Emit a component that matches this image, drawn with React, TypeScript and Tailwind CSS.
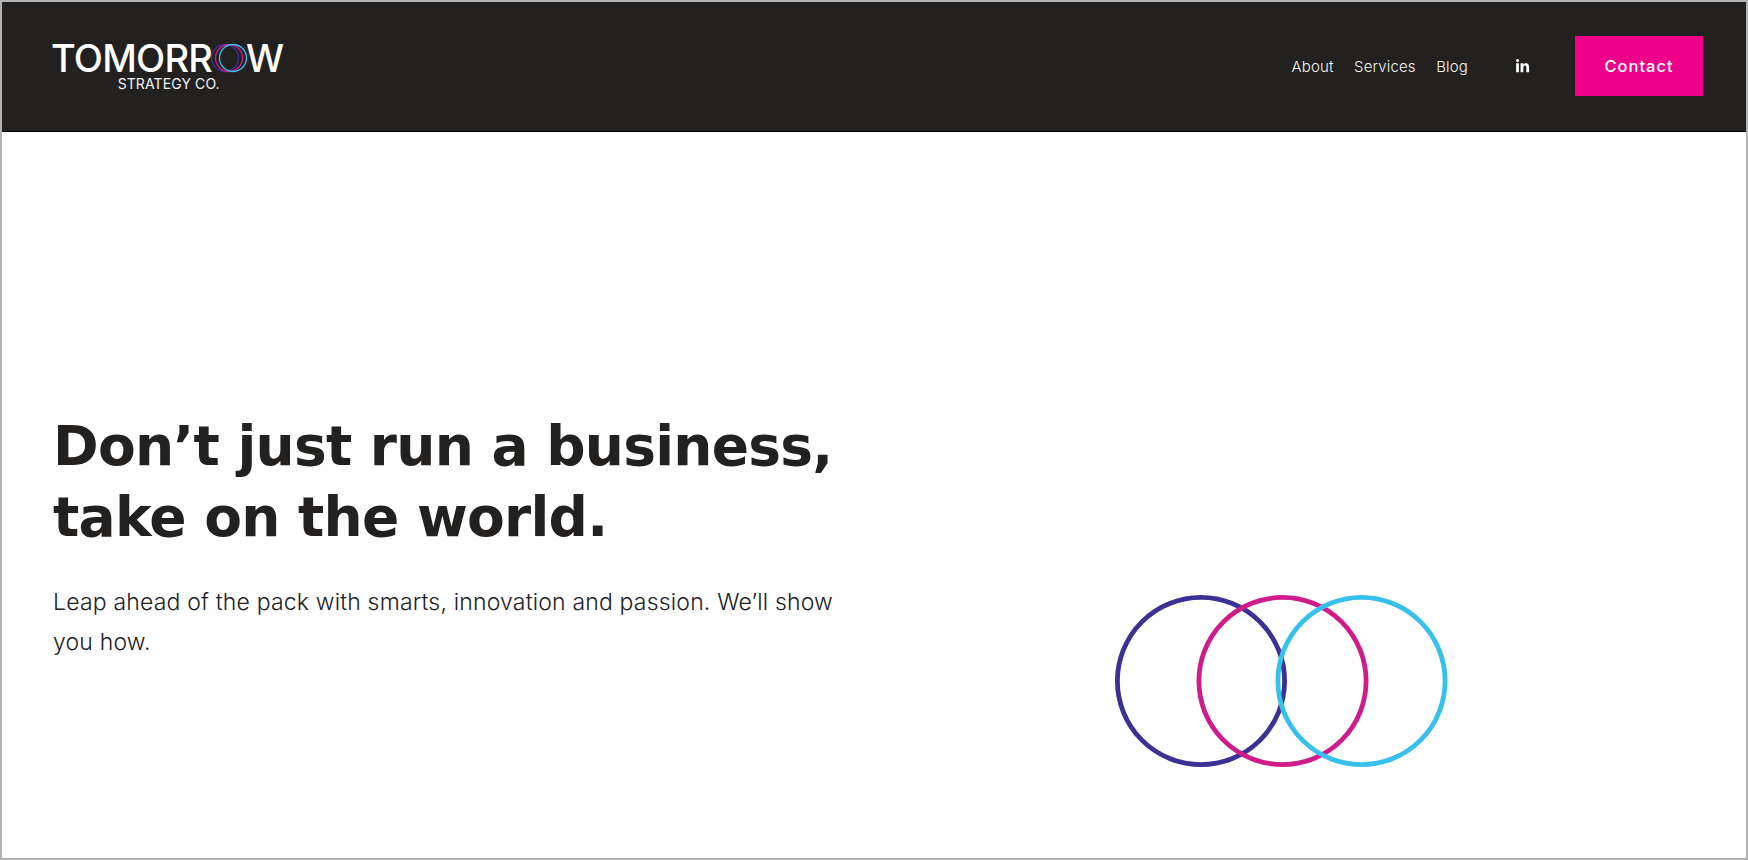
import { FaLinkedinIn } from "react-icons/fa";

function Logo() {
  return (
    <a href="#" className="flex flex-col items-center pt-px text-white font-['Inter',sans-serif]">
      <span className="flex items-center text-[38px] leading-[32px] font-medium tracking-[-0.8px]">
        TOMORR
        <svg width="38" height="32" viewBox="0 0 38 32" fill="none" className="-ml-[2px] -mr-[2px]">
          <circle cx="15" cy="16" r="13.5" stroke="#3b3195" strokeWidth="1.3" />
          <circle cx="19" cy="16" r="13.5" stroke="#d01c8b" strokeWidth="1.3" />
          <circle cx="23" cy="16" r="13.5" stroke="#38c0ec" strokeWidth="1.3" />
        </svg>
        W
      </span>
      <span className="mt-[2px] ml-[3px] text-[14px] leading-[16px] tracking-[0.1px] text-gray-100">STRATEGY CO.</span>
    </a>
  );
}

export default function App() {
  return (
    <div className="flex h-[860px] flex-col border-2 border-[#b3b3b3] bg-white">
      <header className="flex h-[130px] items-center border-b border-black bg-[#22211f] pl-[49px] pr-[43px] pb-px">
        <Logo />
        <nav className="ml-auto flex items-center gap-[20.5px] pt-[2px] text-[15px] font-light tracking-[0.15px] text-gray-100 font-['Inter',sans-serif]">
          <a href="#">About</a>
          <a href="#">Services</a>
          <a href="#">Blog</a>
        </nav>
        <a href="#" className="ml-[46.5px] text-white">
          <FaLinkedinIn size={15} />
        </a>
        <a
          href="#"
          className="ml-[45.5px] flex h-[60px] w-[128px] items-center justify-center bg-[#ee008c] text-[16.5px] font-medium tracking-[1px] text-white font-['Inter',sans-serif]"
        >
          Contact
        </a>
      </header>
      <main className="flex flex-1">
        <section className="flex w-[880px] flex-col pl-[51px] pt-[279px] text-[#22211f]">
          <h1 className="text-[55px] leading-[71px] font-bold tracking-[-0.75px] font-['DejaVu_Sans',sans-serif]">
            Don’t just run a business,
            <br />
            take on the world.
          </h1>
          <p className="mt-[29px] w-[800px] text-[23px] leading-[40px] font-[275] tracking-[0.18px] font-['Inter',sans-serif]">
            Leap ahead of the pack with smarts, innovation and passion. We’ll show you how.
          </p>
        </section>
        <section className="flex flex-1 pl-[233px] pt-[463px]">
          <svg width="333" height="172" viewBox="0 0 333 172" fill="none">
            <circle cx="86" cy="86" r="83.6" stroke="#3b3195" strokeWidth="4.8" />
            <circle cx="167.5" cy="86" r="83.6" stroke="#d01c8b" strokeWidth="4.8" />
            <circle cx="246.5" cy="86" r="83.6" stroke="#38c0ec" strokeWidth="4.8" />
          </svg>
        </section>
      </main>
    </div>
  );
}
